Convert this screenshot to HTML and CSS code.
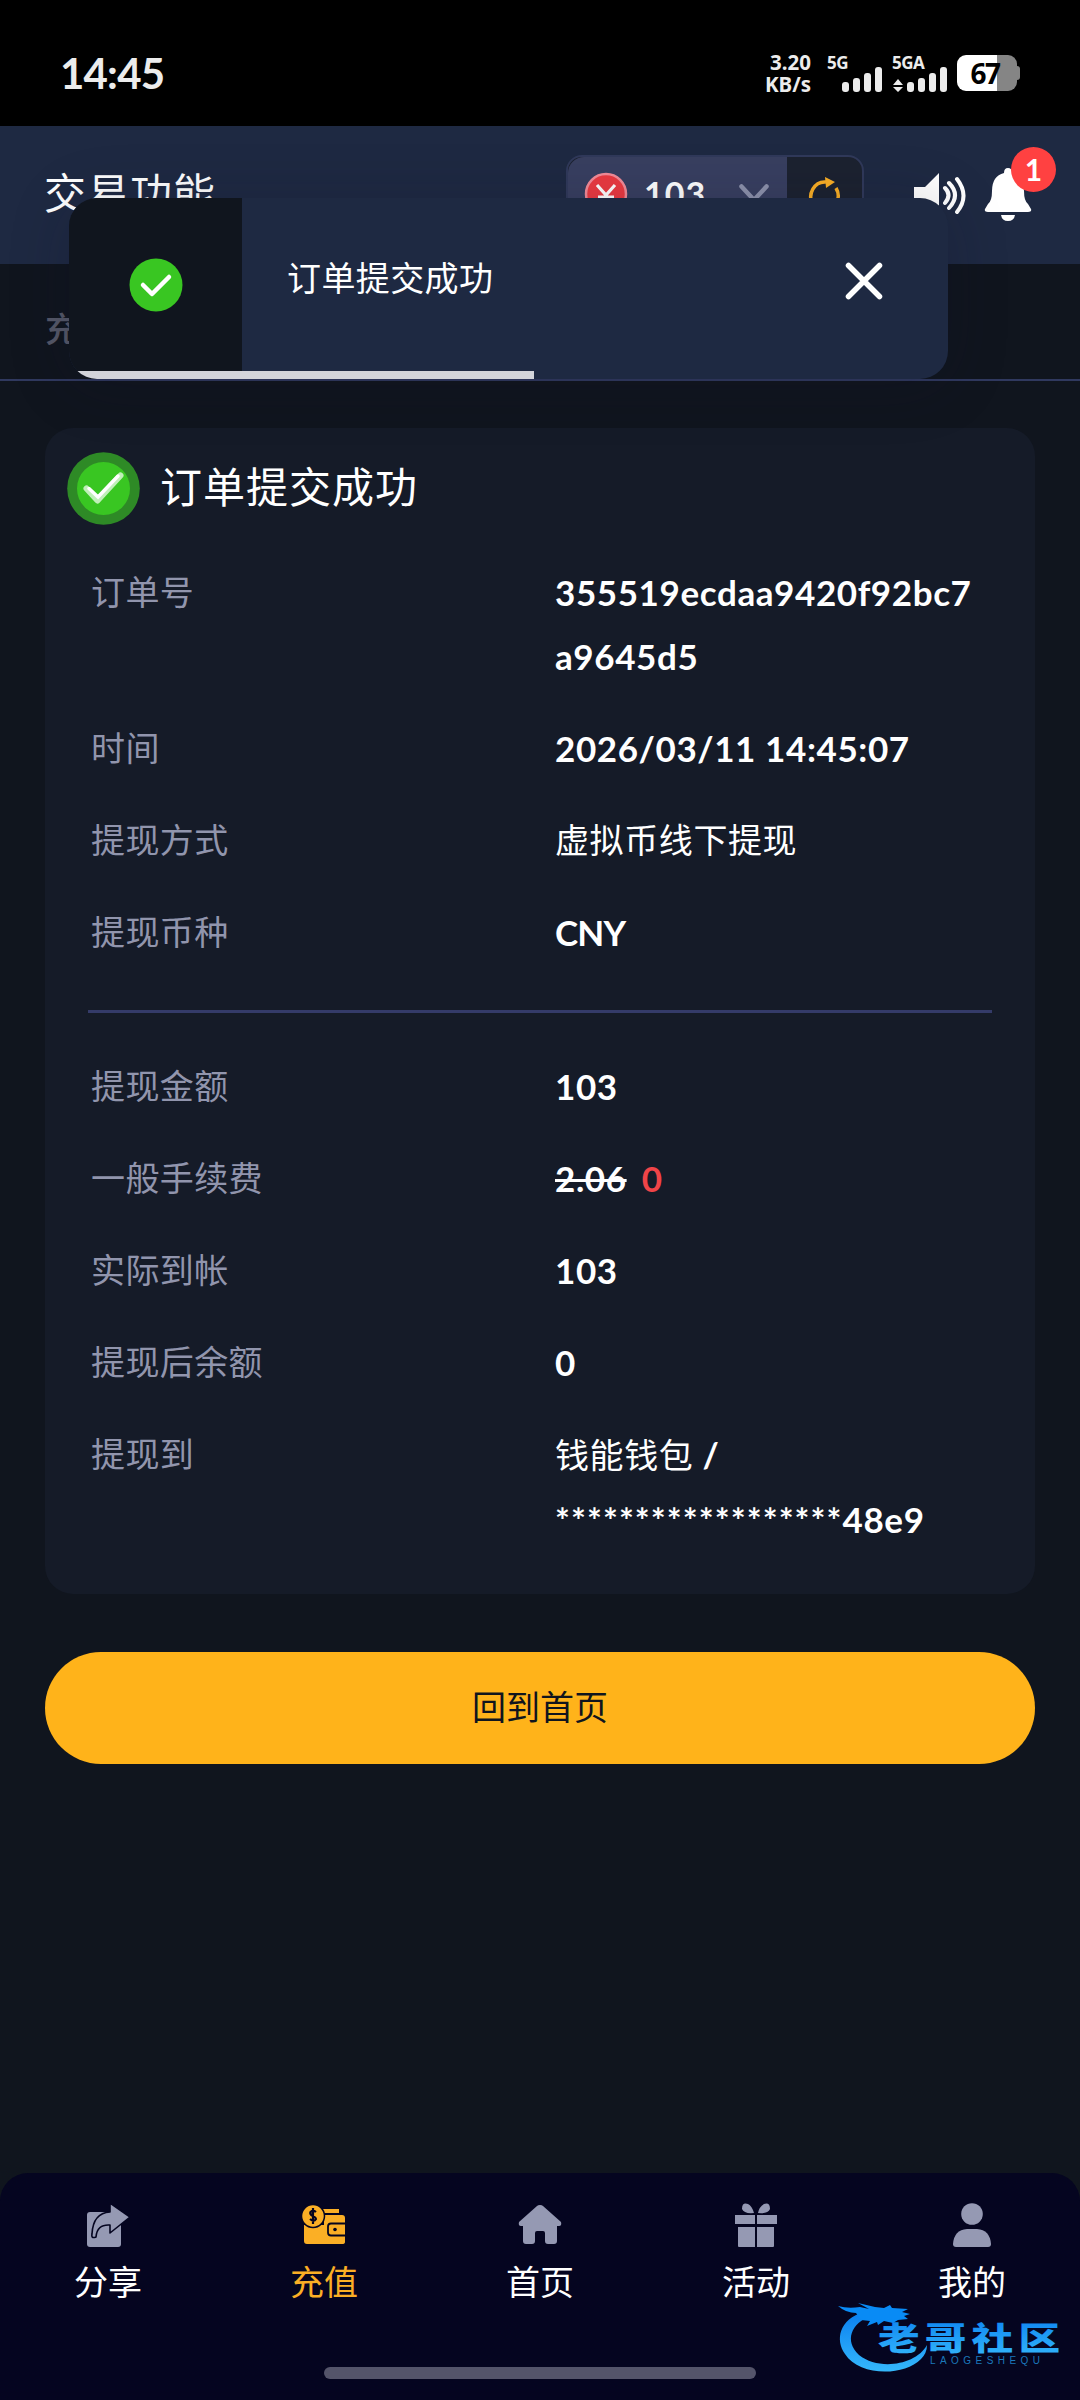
FILE: index.html
```html
<!DOCTYPE html>
<html lang="zh-CN">
<head>
<meta charset="utf-8">
<title>交易功能</title>
<link rel="stylesheet" href="styles.css">
</head>
<body>
<div class="screen">
  <div class="status">
    <span class="clock">14:45</span>
    <div class="speed"><span>3.20</span><span>KB/s</span></div>
    <div class="signal">
      <span class="net">5G</span>
      <svg class="bars" width="62" height="26" viewBox="0 0 62 26"><g fill="#ececec"><rect x="15" y="15" width="7" height="10" rx="3"/><rect x="26" y="11" width="7" height="14" rx="3"/><rect x="37" y="6" width="7" height="19" rx="3"/><rect x="48" y="0" width="7" height="25" rx="3"/></g></svg>
    </div>
    <div class="signal">
      <span class="net">5GA</span>
      <svg class="bars" width="62" height="26" viewBox="0 0 62 26"><g fill="#ececec"><path d="M6 12l5 6H1zM6 25l5-5H1z"/><rect x="15" y="15" width="7" height="10" rx="3"/><rect x="26" y="11" width="7" height="14" rx="3"/><rect x="37" y="6" width="7" height="19" rx="3"/><rect x="48" y="0" width="7" height="25" rx="3"/></g></svg>
    </div>
    <div class="battery"><span>67</span></div>
  </div>

  <header class="header">
    <h1 class="title">交易功能</h1>
    <div class="wallet">
      <div class="wallet-main">
        <svg width="44" height="44" viewBox="0 0 44 44"><circle cx="22" cy="22" r="20" fill="#ec3a41" stroke="#f48c98" stroke-width="2.5"/><path d="M13 13l9 10 9-10M14 25h16M14 30h16M22 22v13" fill="none" stroke="#fff" stroke-width="3.2"/></svg>
        <span class="balance">103</span>
        <svg class="chev" width="30" height="20" viewBox="0 0 30 20"><path d="M2.500 2.500L15 16 27.500 2.500" fill="none" stroke="#8d92ac" stroke-width="4.500" stroke-linecap="round"/></svg>
      </div>
      <div class="wallet-refresh">
        <svg width="34" height="40" viewBox="0 0 34 40"><path d="M5 31A14 15 0 0 1 18 8M28 14a14 15 0 0 1-12 23" fill="none" stroke="#fbaf25" stroke-width="3.500"/><path d="M17 3l10 5-9 6z" fill="#fbaf25"/></svg>
      </div>
    </div>
    <svg class="sound" width="54" height="46" viewBox="0 0 54 46"><path d="M1 15h11L26 1v33L12 27H1z" fill="#fff"/><path d="M32 16q7 7 0 15M36 11q12 12 0 25M44 7q13 17 0 33" fill="none" stroke="#fff" stroke-width="4" stroke-linecap="round"/></svg>
    <div class="bell">
      <svg width="48" height="56" viewBox="0 0 48 56"><path d="M20 7q0-5 4-5t4 5q12 3 12 18 0 10 4 13l3 5q1 3-3 3H4q-4 0-3-3l3-5q4-3 4-13Q8 10 20 7zM17 49h14q-1 6-7 6t-7-6z" fill="#fff"/></svg>
      <span class="badge">1</span>
    </div>
  </header>

  <div class="tabs"><span>充值</span></div>

  <div class="toast">
    <div class="toast-icon">
      <svg width="54" height="54" viewBox="0 0 54 54"><circle cx="27" cy="27" r="26.500" fill="#39c622"/><path d="M14 27l9 9 17-17" fill="none" stroke="#fff" stroke-width="4.500" stroke-linecap="round" stroke-linejoin="round"/></svg>
    </div>
    <span class="toast-text">订单提交成功</span>
    <svg class="close" width="40" height="40" viewBox="0 0 40 40"><path d="M4.500 4.500l31 31M35.500 4.500l-31 31" stroke="#fff" stroke-width="5.500" stroke-linecap="round"/></svg>
    <div class="toast-progress"></div>
  </div>

  <main class="main">
    <section class="card">
      <div class="card-head">
        <svg width="73" height="73" viewBox="0 0 73 73"><circle cx="36.500" cy="36.500" r="36.300" fill="#2e8a26"/><circle cx="36.500" cy="36.500" r="26.500" fill="#39c622"/><path d="M19.500 36.500l11 12 23-25" fill="none" stroke="#c0efb9" stroke-width="6" stroke-linecap="round" stroke-linejoin="round"/><path d="M22 36.500l9 8.500 20-21" fill="none" stroke="#fff" stroke-width="3.500" stroke-linecap="round"/></svg>
        <h2>订单提交成功</h2>
      </div>
      <dl class="rows">
        <dt>订单号</dt><dd>355519ecdaa9420f92bc7<br>a9645d5</dd>
        <dt>时间</dt><dd>2026/03/11 14:45:07</dd>
        <dt>提现方式</dt><dd class="cjk">虚拟币线下提现</dd>
        <dt>提现币种</dt><dd class="currency">CNY</dd>
      </dl>
      <hr class="rule">
      <dl class="rows">
        <dt>提现金额</dt><dd>103</dd>
        <dt>一般手续费</dt><dd><s>2.06</s><span class="free">0</span></dd>
        <dt>实际到帐</dt><dd>103</dd>
        <dt>提现后余额</dt><dd>0</dd>
        <dt>提现到</dt><dd><span class="cjk">钱能钱包</span> /<br><span class="stars">******************</span>48e9</dd>
      </dl>
    </section>
    <button class="home-btn" type="button">回到首页</button>
  </main>

  <nav class="nav">
    <a class="nav-item"><svg width="44" height="46" viewBox="0 0 44 46"><path d="M4 9h28q3 0 3 3v29q0 3-3 3H4q-3 0-3-3V12q0-3 3-3z" fill="#9599b3"/><path d="M24 0l20 14-20 16v-8q-13-1-14 12-5 2-4-3Q7 10 24 9z" fill="#9599b3" stroke="#050520" stroke-width="1.600" stroke-linejoin="round"/></svg><span>分享</span></a>
    <a class="nav-item active"><svg width="44" height="46" viewBox="0 0 44 46"><path d="M21 6h16v4H21zM2 22h20V12h18q3 0 3 3v24q0 2-3 2H5q-3 0-3-3z" fill="#fbaf25"/><circle cx="11" cy="13" r="11.500" fill="#fbaf25" stroke="#050520" stroke-width="1.500"/><path d="M43 20.500H29q-3 0-3 3v6q0 3 3 3h14" fill="none" stroke="#050520" stroke-width="1.800"/><circle cx="33" cy="26.500" r="1.800" fill="#050520"/><path d="M14 9q-3-2.500-5.500 0c-2 4 5.500 4 5.500 7q-2 3.500-6 0M11 5v16" fill="none" stroke="#050520" stroke-width="2.200"/></svg><span>充值</span></a>
    <a class="nav-item"><svg width="44" height="46" viewBox="0 0 44 46"><path d="M22 2q2 0 3 1l18 16q1 4-2 4h-2v15q0 3-3 3h-6q-3 0-3-3v-8q0-2-2-2h-6q-2 0-2 2v8q0 3-3 3H8q-3 0-3-3V23H3q-3 0-2-4L19 3q1-1 3-1z" fill="#9599b3"/></svg><span>首页</span></a>
    <a class="nav-item"><svg width="44" height="46" viewBox="0 0 44 46"><path d="M1 12h20v9H1zM23 12h20v9H23zM4 24h17v20H5q-1 0-1-1zM23 24h17v19q0 1-1 1H23zM20 10Q10 11 8 6 8-1 14 1q4 2 6 9zM24 10Q34 11 36 6q0-7-6-5-5 3-6 9z" fill="#9599b3"/></svg><span>活动</span></a>
    <a class="nav-item"><svg width="44" height="46" viewBox="0 0 44 46"><circle cx="22" cy="11" r="10.800" fill="#9599b3"/><path d="M17 26h10q13 1 14 15 0 3-3 3H6q-3 0-3-3 1-14 14-15z" fill="#9599b3"/></svg><span>我的</span></a>
    <div class="handle"></div>
  </nav>

  <div class="watermark">
    <svg width="240" height="95" viewBox="0 0 240 95">
      <defs><linearGradient id="wm" x1="0" y1="0" x2="0" y2="1"><stop offset="0" stop-color="#0a7ff0"/><stop offset="1" stop-color="#35b8fb"/></linearGradient></defs>
      <path d="M34 22C9 29 5 50 15 64C29 86 73 87 91 69Q97 63 97 55C86 75 49 81 29 65C14 51 21 33 41 26z" fill="url(#wm)"/>
      <path d="M8 16q10 3 22 1l9 2-11-6 17 4 9 1 6-3 2 3 16 1-6 3 8 2-6 2 4 3-10 1-5 3-9-2-6 4-1-3-10 4 3-5-9-1-5-7q-10 0-18-7z" fill="#098bf5"/>
      <text transform="translate(48 60) scale(1.3 1)" class="wm-name" fill="url(#wm)">老哥社区</text>
      <text x="100" y="74" class="wm-sub" textLength="110">LAOGESHEQU</text>
    </svg>
  </div>
</div>
</body>
</html>
```

FILE: styles.css
```css
* { box-sizing: border-box; }
body { margin: 0; background: #10151e; }
.screen {
  position: relative;
  width: 1080px;
  height: 2400px;
  overflow: hidden;
  display: flex;
  flex-direction: column;
  background: #10151e;
  color: #fff;
  font-family: Lato, "Noto Sans CJK SC", sans-serif;
  font-size: 34px;
}
svg { display: block; flex: none; }

/* status bar */
.status {
  height: 126px;
  flex: none;
  padding: 0 63px 0 60px;
  display: flex;
  align-items: flex-start;
  background: #000;
  color: #ececec;
  font-family: "Noto Sans", sans-serif;
}
.clock { flex: 1; margin-top: 46px; font-family: Lato, sans-serif; font-size: 42px; line-height: 54px; font-weight: 700; letter-spacing: -.8px; }
.speed { width: 48px; margin: 51px 16px 0 0; display: flex; flex-direction: column; align-items: flex-end; font-size: 20.5px; line-height: 22px; font-weight: 700; }
.signal { width: 65px; margin-top: 54px; display: flex; flex-direction: column; }
.net { height: 13px; line-height: 18px; font-size: 17px; font-weight: 700; letter-spacing: -.5px; }
.battery {
  width: 60px; height: 36px; margin-top: 55px; padding-right: 4px; border-radius: 9px;
  background: linear-gradient(90deg, #fff 66%, #858585 66%);
  color: #000; position: relative; text-align: center;
  font-size: 28px; line-height: 36px; font-weight: 700; letter-spacing: -1.5px;
}
.battery::after { content: ""; position: absolute; right: -3px; top: 11px; width: 3px; height: 14px; background: #858585; border-radius: 0 3px 3px 0; }

/* header */
.header { height: 138px; flex: none; padding: 0 23px 0 44px; display: flex; align-items: flex-start; background: #1e2942; }
.title { margin: 36px 0 0; flex: 1; font-size: 42px; line-height: 62px; font-weight: 400; letter-spacing: 1px; }
.wallet { width: 298px; height: 77px; margin: 29px 49px 0 0; display: flex; border: 2px solid #30395a; border-radius: 16px; overflow: hidden; background: #1c2230; }
.wallet-main { width: 219px; display: flex; align-items: center; padding: 0 18px 0 16px; background: #383f60; border-radius: 16px 0 0 0; }
.balance { flex: 1; margin-left: 16px; font-weight: 700; font-size: 34px; letter-spacing: 1px; }
.wallet-refresh { flex: 1; display: flex; align-items: center; justify-content: center; }
.sound { margin: 46px 17px 0 0; }
.bell { position: relative; width: 73px; margin-top: 40px; }
.badge { position: absolute; left: 27px; top: -19px; width: 45px; height: 45px; border-radius: 50%; background: #ff4141; text-align: center; font-size: 30px; line-height: 44px; font-weight: 700; }

.tabs { height: 117px; flex: none; padding: 40px 45px 0; border-bottom: 2px solid #30395f; color: #555868; line-height: 50px; font-weight: 500; }

/* notification laid over the header */
.toast {
  position: absolute; left: 69px; top: 198px; width: 879px; height: 181px;
  display: flex; align-items: flex-start; border-radius: 28px; overflow: hidden;
  background: #1e2942;
  box-shadow: 0 6px 60px rgba(16, 16, 40, .22);
}
.toast-icon { width: 173px; height: 181px; padding-top: 60px; display: flex; justify-content: center; align-items: flex-start; background: #10151e; }
.toast-text { flex: 1; margin: 55px 0 0 45px; line-height: 50px; letter-spacing: .4px; }
.close { margin: 63px 64px 0 0; }
.toast-progress { position: absolute; left: 0; bottom: 0; width: 465px; height: 8px; background: #d3d4da; }

/* order summary */
.main { flex: 1; padding: 47px 45px 0; }
.card { height: 1166px; border-radius: 28px; background: #151b28; padding: 24px 43px 0; }
.card-head { display: flex; align-items: center; gap: 20px; height: 73px; margin-left: -21px; }
.card-head h2 { margin: 0 0 3px; font-size: 42px; line-height: 62px; font-weight: 400; letter-spacing: 1px; }
.rows { margin: 35px 0 0; padding-left: 3px; display: grid; grid-template-columns: 464px 1fr; row-gap: 28px; line-height: 64px; }
.rows dt { color: #9195ad; letter-spacing: .4px; }
.rows dd { margin: 0; font-size: 35px; font-weight: 700; letter-spacing: .6px; white-space: nowrap; }
.rows .cjk { font-size: 34px; font-weight: 400; }
.rows .currency { letter-spacing: -.8px; }
.stars { letter-spacing: 1.1px; }
.rule { height: 3px; margin: 46px 0 0; border: 0; background: #343b69; }
.rule + .rows { margin-top: 41px; }
.free { margin-left: 15px; color: #f04448; }
.home-btn { display: block; width: 100%; height: 112px; margin-top: 58px; padding: 0 0 5px; border: 0; border-radius: 56px; background: #ffb31a; color: #10151e; font: 400 34px "Noto Sans CJK SC", sans-serif; }

/* bottom navigation */
.nav { position: relative; height: 227px; flex: none; display: flex; background: #050520; border-radius: 28px 28px 0 0; }
.nav-item { flex: 1; padding-top: 30px; display: flex; flex-direction: column; align-items: center; line-height: 50px; }
.nav-item svg { margin-bottom: 8px; }
.nav-item.active { color: #fbaf25; }
.handle { position: absolute; left: 324px; top: 194px; width: 432px; height: 12px; border-radius: 6px; background: #54546a; }

.watermark { position: absolute; left: 830px; top: 2290px; }
.wm-name { font: 900 32px "Noto Sans CJK SC", sans-serif; letter-spacing: 4px; }
.wm-sub { font: 400 10px "Liberation Sans", sans-serif; fill: #1b78bb; }
```
